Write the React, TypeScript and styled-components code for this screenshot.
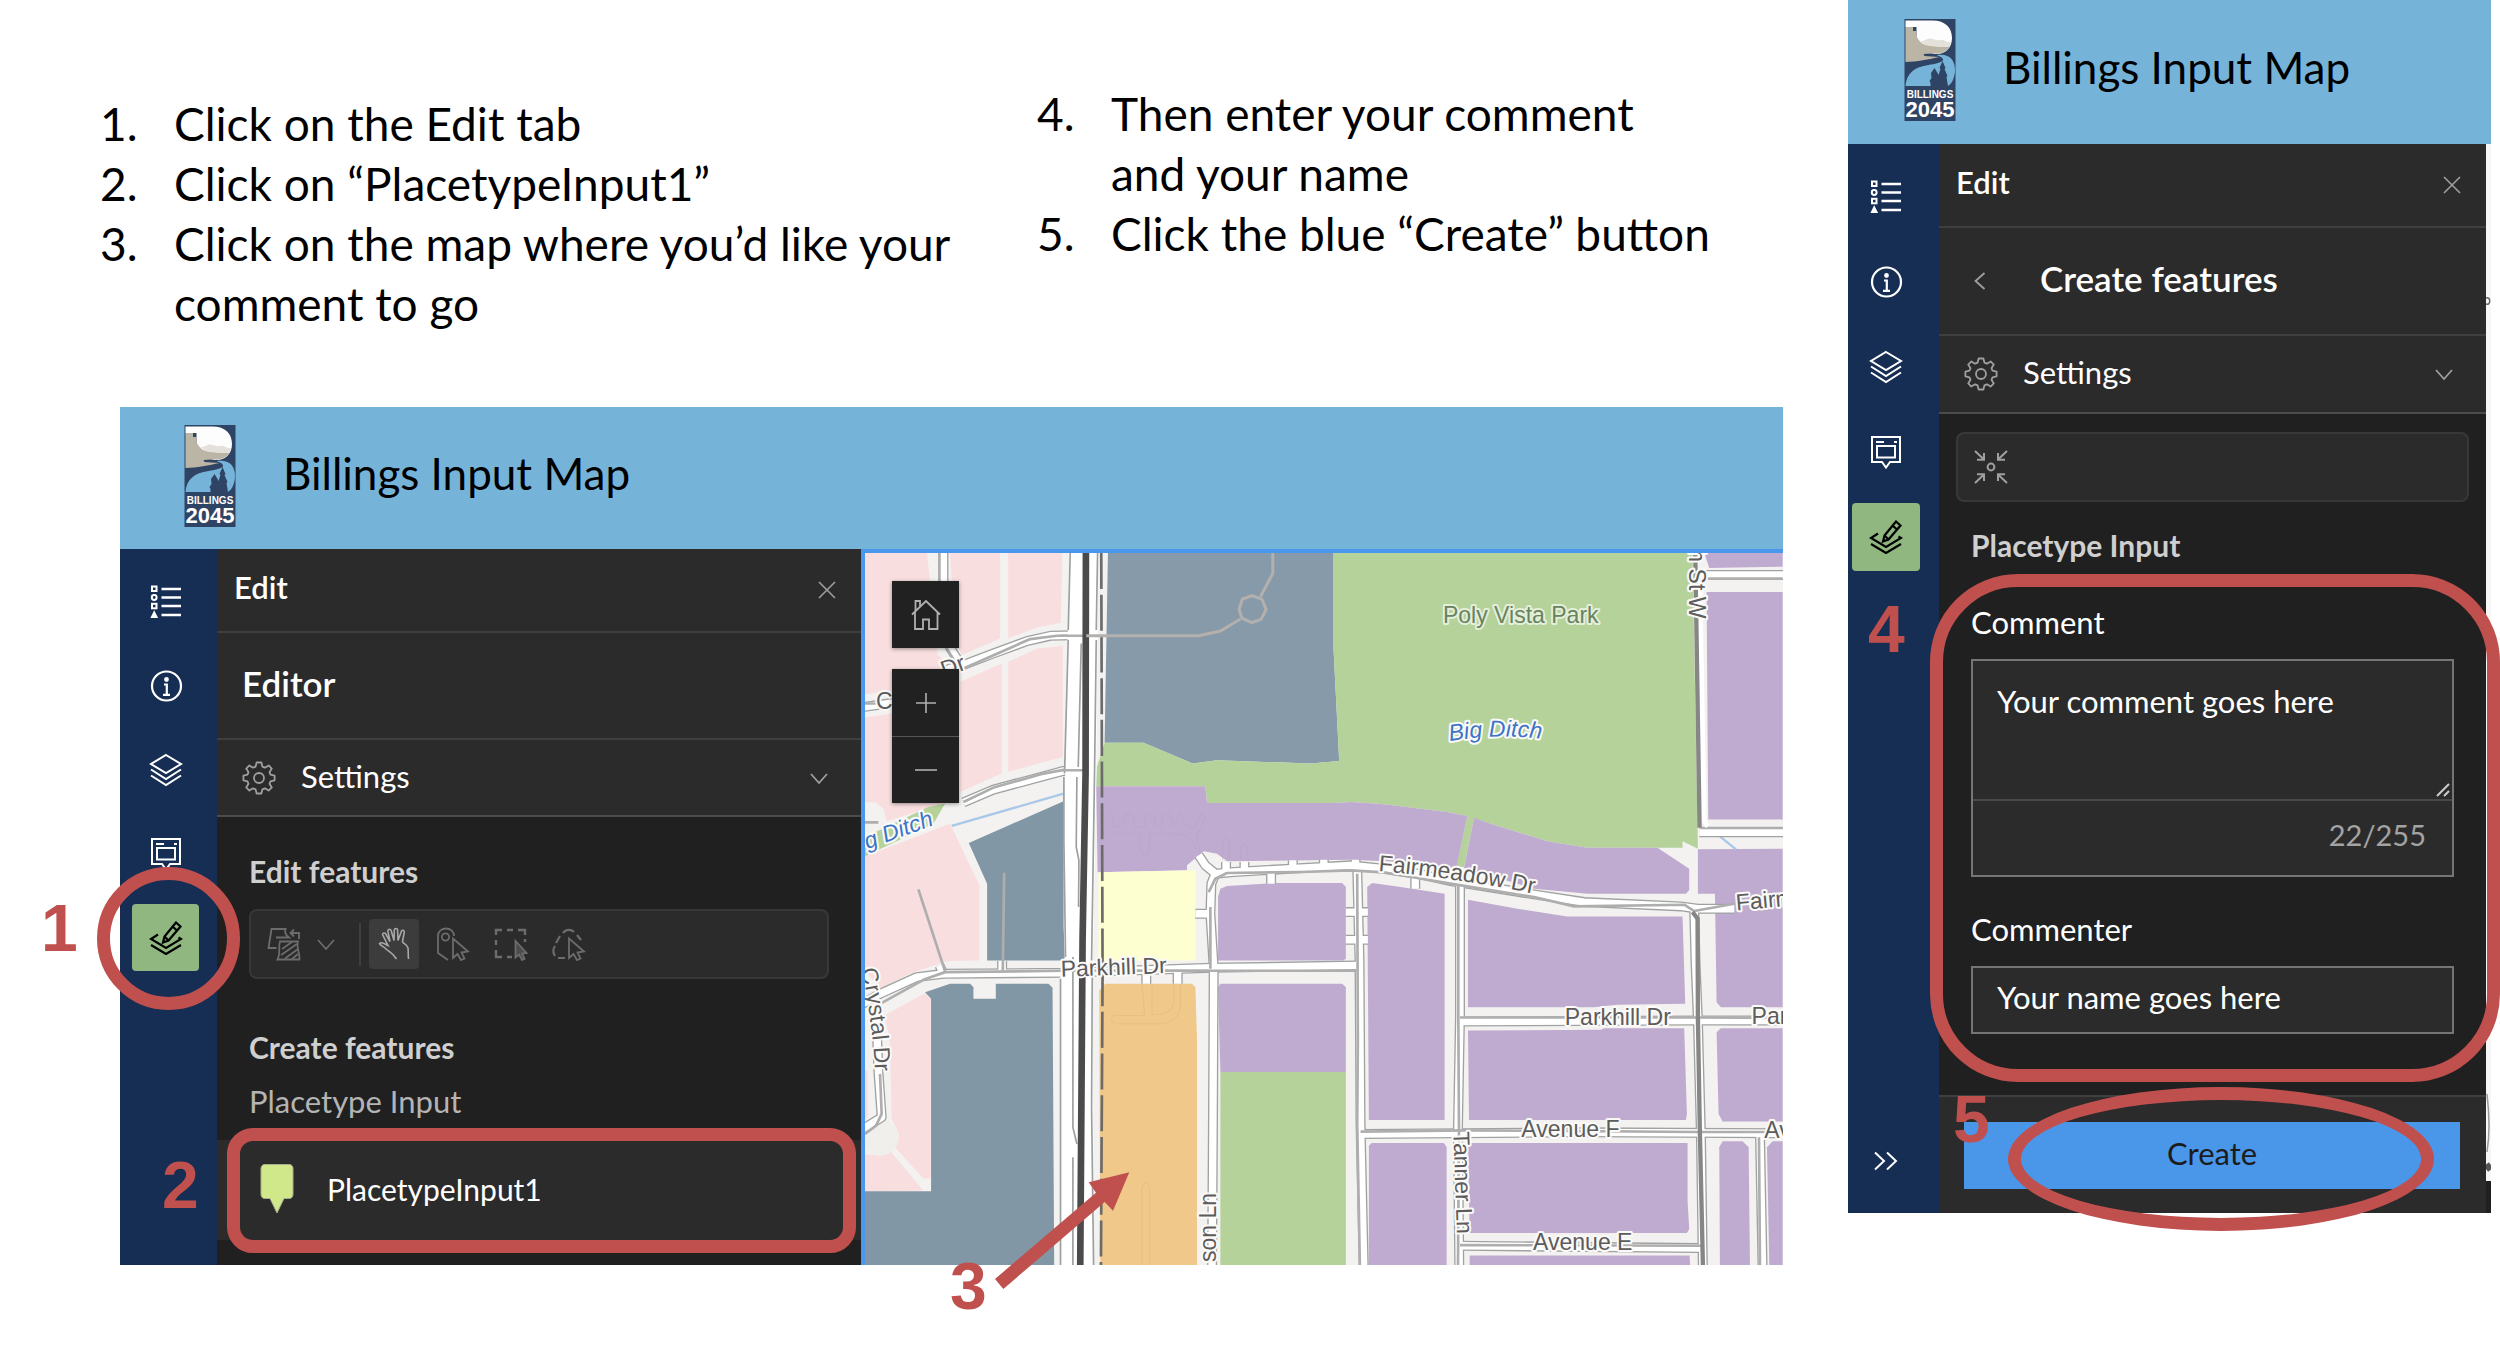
import React from "react";
import styled, { createGlobalStyle } from "styled-components";

const red = "#c0504d";
const ui = `"Lato", "Open Sans", sans-serif`;
const arial = `"Liberation Sans", Arial, sans-serif`;

const GlobalStyle = createGlobalStyle`
  * { box-sizing: border-box; }
  body { margin: 0; background: #fff; font-family: ${ui}; }
  h1, h2, h3, p, ol { margin: 0; padding: 0; font-weight: 400; }
  button, input, textarea { font: inherit; }
  svg { display: block; }
`;

/* ---------- page ---------- */

const Page = styled.main`
  display: grid;
  grid-template-columns: minmax(0, 1fr) 652px;
  align-items: start;
`;

const Guide = styled.section`
  padding: 94px 65px 60px 120px;
`;

const Columns = styled.div`
  display: grid;
  grid-template-columns: 937px 1fr;
  margin-left: -20px;
  min-height: 313px;
  align-items: start;
`;

const Steps = styled.ol<{ $raised?: boolean }>`
  display: grid;
  list-style: none;
  font-size: 46px;
  line-height: 60px;
  color: #000;
  margin-top: ${(p) => (p.$raised ? "-10px" : "0")};
`;

const Step = styled.li`
  display: grid;
  grid-template-columns: 74px 1fr;
`;

/* ---------- application window ---------- */

const Window = styled.section`
  position: relative;
  background: #202020;
`;

const Banner = styled.header<{ $height: number; $inset: number }>`
  display: flex;
  align-items: center;
  gap: 47px;
  height: ${(p) => p.$height}px;
  padding: 0 0 4px ${(p) => p.$inset}px;
  background: #76b3d9;
`;

const AppTitle = styled.h1`
  font-size: 44px;
  line-height: 52px;
  padding-bottom: 6px;
  color: #000;
`;

const Workspace = styled.div<{ $columns: string }>`
  display: grid;
  grid-template-columns: ${(p) => p.$columns};
`;

const Rail = styled.nav<{ $inset: number; $size: number }>`
  display: flex;
  flex-direction: column;
  align-items: flex-start;
  gap: 17px;
  padding: 19px 0 18px ${(p) => p.$inset}px;
  background: #172e54;
  button { width: ${(p) => p.$size}px; height: ${(p) => p.$size}px; }
`;

const RailSlot = styled.div`
  position: relative;
`;

const RailButton = styled.button<{ $active?: boolean }>`
  display: grid;
  place-items: center;
  padding: 0;
  border: 0;
  border-radius: 4px;
  color: ${(p) => (p.$active ? "#000" : "#fff")};
  background: ${(p) => (p.$active ? "#8fb77f" : "transparent")};
`;

const RailEnd = styled.div`
  margin-top: auto;
`;

const Panel = styled.div`
  display: flex;
  flex-direction: column;
  background: #202020;
  color: #fff;
`;

const PanelRow = styled.div<{ $height: number; $pad: string; $gap?: number; $strong?: boolean }>`
  display: flex;
  align-items: center;
  gap: ${(p) => p.$gap ?? 0}px;
  height: ${(p) => p.$height}px;
  padding: ${(p) => p.$pad};
  background: #2b2b2b;
  border-bottom: 2px solid ${(p) => (p.$strong ? "#4c4c4c" : "#3f3f3f")};
`;

const PanelTitle = styled.h2<{ $large?: boolean }>`
  flex: 1;
  font-size: ${(p) => (p.$large ? 35 : 31)}px;
  line-height: 36px;
  font-weight: 600;
  padding-bottom: 6px;
`;

const SettingsToggle = styled.button`
  display: flex;
  align-items: center;
  flex: 1;
  gap: 25px;
  padding: 0;
  border: 0;
  background: none;
  color: #fff;
  font-size: 31px;
  line-height: 36px;
  text-align: left;
`;

const SettingsText = styled.span`
  flex: 1;
  padding-bottom: 4px;
`;

const IconButton = styled.button<{ $active?: boolean; $size?: number }>`
  display: grid;
  place-items: center;
  width: ${(p) => p.$size ?? 34}px;
  height: ${(p) => p.$size ?? 34}px;
  padding: 0;
  border: 0;
  border-radius: 4px;
  color: ${(p) => (p.$active ? "#a8a8a8" : "inherit")};
  background: ${(p) => (p.$active ? "#3c3c3c" : "none")};
`;

const Muted = styled.span`
  display: grid;
  color: #9f9f9f;
`;

const Body = styled.div<{ $pad: string }>`
  display: flex;
  flex-direction: column;
  flex: 1;
  padding: ${(p) => p.$pad};
`;

const SectionTitle = styled.h3<{ $top: number }>`
  margin-top: ${(p) => p.$top}px;
  font-size: 30px;
  line-height: 36px;
  font-weight: 700;
  color: #cfcfcf;
`;

const LayerName = styled.p`
  margin: 18px 0 21px;
  font-size: 31px;
  line-height: 36px;
  color: #b4b4b4;
`;

const Toolbar = styled.div<{ $margin: string }>`
  display: flex;
  align-items: center;
  height: 70px;
  margin: ${(p) => p.$margin};
  padding: 0 16px;
  border: 2px solid #383838;
  border-radius: 8px;
  background: #2b2b2b;
  color: #6c6c6c;
`;

const ToolGroup = styled.div<{ $gap: number }>`
  display: flex;
  align-items: center;
  gap: ${(p) => p.$gap}px;
`;

const Divider = styled.span`
  width: 2px;
  height: 43px;
  margin: 0 8px 0 24px;
  background: #3f3f3f;
`;

const TemplateButton = styled.button`
  position: relative;
  display: flex;
  align-items: center;
  gap: 33px;
  height: 100px;
  margin: 0 -32px;
  padding: 0 0 2px 43px;
  border: 0;
  background: #2b2b2b;
  color: #fff;
  font-size: 30px;
  line-height: 36px;
  text-align: left;
`;

const FieldLabel = styled.label<{ $top: number }>`
  margin-top: ${(p) => p.$top}px;
  font-size: 31px;
  line-height: 36px;
`;

const AreaBox = styled.div`
  position: relative;
  margin-top: 19px;
  border: 2px solid #757575;
  background: #2b2b2b;
`;

const CommentArea = styled.textarea`
  display: block;
  width: 100%;
  height: 140px;
  padding: 22px 24px;
  border: 0;
  border-bottom: 2px solid #484848;
  resize: none;
  background: none;
  color: #fff;
  font-size: 31px;
  line-height: 36px;
  overflow: hidden;
`;

const Grip = styled.svg`
  position: absolute;
  right: 2px;
  top: 122px;
`;

const Counter = styled.div`
  padding: 16px 26px 22px;
  font-size: 29px;
  line-height: 36px;
  text-align: right;
  color: #a3a3a3;
`;

const NameInput = styled.input`
  width: 100%;
  height: 68px;
  margin-top: 19px;
  padding: 0 24px 6px;
  border: 2px solid #757575;
  border-radius: 0;
  background: #2b2b2b;
  color: #fff;
  font-size: 31px;
`;

const Footer = styled.footer`
  display: grid;
  padding: 25px 26px 24px 25px;
  border-top: 2px solid #3f3f3f;
  background: #2b2b2b;
`;

const CreateButton = styled.button`
  height: 67px;
  padding: 0 0 6px;
  border: 0;
  background: #4a97ea;
  color: #1c1c1c;
  font-size: 31px;
`;

const MapEdge = styled.div`
  background: linear-gradient(#f7f7f7 0 1037px, #202020 1037px);
`;

/* ---------- map ---------- */

const MapFrame = styled.div`
  position: relative;
  min-height: 716px;
  border-top: 4px solid #4a97ee;
  border-left: 4px solid #4a97ee;
  overflow: hidden;
`;

const MapCanvas = styled.svg`
  position: absolute;
  inset: 0;
  width: 100%;
  height: 100%;
`;

const MapControls = styled.div`
  position: absolute;
  left: 27px;
  top: 28px;
  display: grid;
  gap: 21px;
`;

const ControlStack = styled.div`
  display: grid;
  box-shadow: 0 1px 4px rgba(0, 0, 0, 0.4);
  button + button { border-top: 1px solid #555; }
`;

const MapButton = styled.button`
  display: grid;
  place-items: center;
  width: 67px;
  height: 67px;
  padding: 0;
  border: 0;
  background: #212121;
  color: #b0b0b0;
`;

/* ---------- callouts laid over the windows ---------- */

const Ring = styled.span<{ $box: string; $radius: string }>`
  position: absolute;
  inset: ${(p) => p.$box};
  border: 13px solid ${red};
  border-radius: ${(p) => p.$radius};
  pointer-events: none;
  z-index: 2;
`;

const Callout = styled.span<{ $left: number; $top: number }>`
  position: absolute;
  left: ${(p) => p.$left}px;
  top: ${(p) => p.$top}px;
  font: 700 66px/48px ${arial};
  color: ${red};
  z-index: 2;
`;

const Arrow = styled.svg`
  position: absolute;
  left: 875px;
  top: 765px;
  z-index: 2;
`;

/* ---------- icons ---------- */

type IconProps = { size?: number; w?: number; children: React.ReactNode; box?: string };
const Icon = ({ size = 34, w = 2, box = "0 0 34 34", children }: IconProps) => (
  <svg width={size} height={size} viewBox={box} fill="none" stroke="currentColor" strokeWidth={w} aria-hidden>
    {children}
  </svg>
);

const LegendIcon = () => (
  <Icon>
    <path d="M12.500 4H32M12.500 12.500H32M12.500 21H32M12.500 30H32" strokeWidth="2.600" />
    <rect x="3" y="1.500" width="4.500" height="4.500" />
    <circle cx="5.200" cy="12.500" r="2.400" />
    <rect x="3" y="18.800" width="4.500" height="4.500" />
    <path d="M5.200 27.500 7.500 32H3Z" fill="currentColor" />
  </Icon>
);

const InfoIcon = () => (
  <Icon w={2.2}>
    <circle cx="17.500" cy="17" r="14.500" />
    <circle cx="17.500" cy="10.500" r="1.300" fill="currentColor" />
    <path d="M15 15.500H17.800V25.500M14 25.800H21" />
  </Icon>
);

const LayersIcon = () => (
  <Icon>
    <path d="M17 2 32 11 17 20 2 11Z" />
    <path d="M2 16.500 17 26 32 16.500M2 22.500 17 32 32 22.500" />
  </Icon>
);

const PopupIcon = () => (
  <Icon>
    <path d="M3 2H31V27H21L17 32.500 13 27H3Z" />
    <rect x="8" y="11" width="18" height="11.500" />
    <path d="M7 7H15M25 7H28" />
  </Icon>
);

const EditIcon = () => (
  <Icon w={2.2}>
    <path d="M9 13.500 2 18 17 27 32 18 29.500 16.500" />
    <path d="M2 24 17 33 32 24" />
    <path d="M27 1.500 31.500 5.500 19.500 19.500 14 21.500 15.500 15.500ZM23.500 5.500 28 9.500M15.500 15.500 19.500 19.500" />
  </Icon>
);

const CloseIcon = () => (
  <Icon size={18} w={1.6} box="0 0 18 18">
    <path d="M1 1 17 17M17 1 1 17" />
  </Icon>
);

const ChevronDown = () => (
  <Icon size={18} w={1.8} box="0 0 18 18">
    <path d="M1 5 9 14 17 5" />
  </Icon>
);

const ChevronLeft = () => (
  <Icon size={18} w={1.8} box="0 0 18 18">
    <path d="M13.500 1 4.500 9 13.500 17" />
  </Icon>
);

const ExpandIcon = () => (
  <Icon size={26} w={2} box="0 0 26 26">
    <path d="M2 4.500 11 13 2 21.500M14 4.500 23 13 14 21.500" />
  </Icon>
);

const GearIcon = () => (
  <Icon w={1.8}>
    <path d="M14.600 1.500H19.400L20.400 5.600 23 6.700 26.600 4.400 29.800 7.600 27.500 11.200 28.500 13.700 32.600 14.700V19.300L28.500 20.300 27.500 22.800 29.800 26.400 26.600 29.600 23 27.300 20.400 28.400 19.400 32.500H14.600L13.600 28.400 11 27.300 7.400 29.600 4.200 26.400 6.500 22.800 5.500 20.300 1.400 19.300V14.700L5.500 13.700 6.500 11.200 4.200 7.600 7.400 4.400 11 6.700 13.600 5.600Z" strokeLinejoin="round" />
    <circle cx="17" cy="17" r="5" />
  </Icon>
);

const TransferIcon = () => (
  <Icon w={1.8}>
    <path d="M9.500 21H1.500L4.500 2H18.500C17 6 20 9 22 10.500H9" />
    <path d="M13 14.500H31C29 20 33 26 32.500 32.500H10.500C14 26 11 20 13 14.500Z" />
    <path d="M15 22 25 15M14 28 30 17M18 31.500 31 22M25 32 31 27" />
    <path d="M24 6H32V12M27 2.500 23.500 6 27 9.500" />
  </Icon>
);

const HandIcon = () => (
  <Icon w={1.6}>
    <path d="M19.500 32C16 26 11.500 24.500 8.500 21.500 6.500 19.500 3 18.500 2.500 16.500 4.500 14 8 17 11 18.500L5.500 7.500C5.500 5.500 8 5.500 8.800 7L13 14.500 10.800 4C11 1.800 13.500 1.800 14.200 3.800L17 13.500 17.300 2.800C17.800 1 20.300 1 20.600 2.800L21 13.500 24.500 4C25.500 2.500 27.500 3.500 27.300 5.200L25.500 14.500C26 17 30 17 31 21 31.500 25 31 28.500 31.500 32" />
  </Icon>
);

const pointer = "M17 11.500V31L21.500 27 25 33 28.500 31.500 25.500 25.500 32 24.500Z";

const SelectFeatureIcon = () => (
  <Icon w={1.8}>
    <path d="M12 33 2 26V9C2 4 6 1.500 10 1.500S18 4 18 9" />
    <circle cx="9.500" cy="10" r="3.600" />
    <path d={pointer} />
  </Icon>
);

const SelectRectIcon = () => (
  <Icon w={2.4}>
    <path d="M2 8V3H8M13 3H19M24 3H31V8M31 12V15M2 13V18M2 23V30H8M13 30H18" />
    <path d="M21.500 14V30.500L25 27.500 28 33 30.500 31.800 28 26.500 32.500 26Z" strokeWidth="1.800" fill="currentColor" fillOpacity=".5" />
  </Icon>
);

const SelectLassoIcon = () => (
  <Icon w={1.8}>
    <path d="M11 6C14 2 19 2 22 5M25 8 29 13M8 9 4 16M3 19C1 22 1 26 3 29M6 31H13" strokeWidth="2.200" />
    <path d={pointer} />
  </Icon>
);

const CollapseIcon = () => (
  <Icon w={2}>
    <path d="M1 1 10 9.500M10 3V9.800H3M33 1 24 9.500M24 3V9.800H31M1 33 10 24.500M10 31V24.200H3M33 33 24 24.500M24 31V24.200H31" />
    <circle cx="17" cy="17" r="3.400" />
  </Icon>
);

const HomeIcon = () => (
  <Icon size={32} w={1.8} box="0 0 32 32">
    <path d="M2 15.500 16 2 30 15.500M5 13V30H13V20.500H19V30H27.500V13M5.500 12V2H10V7.500" />
  </Icon>
);

const PinIcon = () => (
  <svg width="34" height="50" viewBox="0 0 34 50" aria-hidden>
    <path d="M5 0.500H29Q33 0.500 33 5V30Q33 34.500 29 34.500H24L17 49 10 34.500H5Q1 34.500 1 30V5Q1 0.500 5 0.500Z" fill="#d1e88a" stroke="#a8ad8d" />
  </svg>
);

const Logo = () => (
  <svg width="52" height="102" viewBox="0 0 51 102" role="img" aria-label="Billings 2045">
    <rect width="51" height="102" fill="#2f4464" />
    <path d="M1 1.500H28C41 1.500 47.500 9 47.500 19S41 35 30 35L12 30V8H1Z" fill="#fdfdfd" />
    <path d="M16 22C21 22 23 19 26 19.500S33 22 36 21 43 24 46.500 23C45 30 41 35 32 35Z" fill="#e3e1da" />
    <path d="M1 8H8.500V12H12V17C14 22 18 26 25 27 32 28 37 28 45 28 42 33 35 35 28 34.500L19 35 20 37 35 38C25 40 12 43 1 43Z" fill="#bbb5a6" />
    <path d="M32 36C45 34 51 41 50.500 52 50 60 46.500 66 43 67H1C2 54 10 48 24 46 37 44 45 41 32 36Z" fill="#76b3d9" />
    <path d="M38 42 41 49 40 50 43 57 42 58 43.500 67H26V64L25 62 27 59 26.500 54 30 49 33 54 34 56 36 50 35 49Z" fill="#2f4464" />
    <text x="25.500" y="79" fontFamily="Liberation Sans, sans-serif" fontSize="10" fontWeight="700" textAnchor="middle" fill="#fff">BILLINGS</text>
    <text x="25.500" y="98" fontFamily="Liberation Sans, sans-serif" fontSize="22" fontWeight="700" textAnchor="middle" fill="#fff">2045</text>
  </svg>
);

/* ---------- map drawing ---------- */

const zones: { fill: string; shapes: string[] }[] = [
  {
    fill: "#f9dedf",
    shapes: [
      "45,39 231,39 240,125 262,340 290,375 130,450 45,462",
      "300,39 450,39 450,295 335,345 315,300",
      "474,39 636,39 632,248 560,262 474,295",
      "330,425 455,370 455,700 330,755",
      "474,365 560,325 638,318 638,650 474,695",
      "45,532 127,520 330,760 280,790 110,843 100,805 75,787 45,785",
      "45,948 300,850 388,1035 388,1260 290,1262 180,1300 90,1345 45,1290",
      "103,1425 225,1358 243,1375 243,1912 220,1914 135,1820 147,1780 125,1735 122,1600 118,1490",
      "45,1840 90,1845 120,1830 220,1950 45,1952",
      "45,1590 53,1590 53,1725 45,1740",
    ],
  },
  {
    fill: "#879aa9",
    shapes: ["773,39 1449,39 1449,325 1466,662 1380,670 1100,660 1027,670 880,608 763,608"],
  },
  {
    fill: "#8297a5",
    shapes: [
      "640,783 356,908 411,1030 411,1260 645,1260 640,1160",
      "225,1355 300,1330 360,1330 370,1340 370,1375 437,1375 437,1330 595,1330 607,1342 612,2175 45,2175 45,1952 243,1952 243,1375",
    ],
  },
  {
    fill: "#b4d29a",
    shapes: [
      "1449,39 2525,39 2541,925 2495,903 2495,922 2210,922 2090,903 1925,852 1870,835 1840,980 1817,980 1850,827 1790,815 1600,792 1500,785 1450,788 1070,788 1065,738 738,738 740,680 763,608 880,608 1027,670 1100,660 1380,670 1466,662 1449,325",
      "45,948 45,890 235,800 285,790 250,850",
      "1110,1594 1486,1594 1486,2175 1110,2175",
    ],
  },
  {
    fill: "#c0abd0",
    shapes: [
      "738,738 1065,738 1070,788 1450,788 1500,785 1600,792 1790,815 1850,827 1817,983 1650,965 1500,958 1130,963 1100,940 1060,933 1010,975 1010,990 742,996",
      "1870,833 1925,852 2090,903 2210,922 2420,922 2515,985 2515,1050 2505,1060 2210,1060 2050,1045 1840,983",
      "2560,39 2795,39 2795,80 2575,84",
      "2567,156 2795,156 2795,838 2572,838",
      "2541,927 2795,925 2795,1400 2610,1400 2597,1385 2592,1060 2541,1060",
      "1110,1045 1130,1037 1280,1028 1475,1028 1486,1040 1486,1255 1478,1260 1103,1260 1103,1070",
      "1550,1040 1565,1028 1650,1040 1782,1060 1782,1738 1555,1738",
      "1852,1078 2000,1105 2150,1128 2495,1128 2503,1390 2300,1393 2230,1400 1852,1400",
      "1103,1340 1110,1330 1475,1330 1486,1340 1486,1594 1110,1594",
      "1852,1470 2250,1468 2260,1463 2500,1463 2503,1560 2508,1720 2505,1738 1855,1738",
      "2597,1475 2610,1463 2795,1463 2795,1743 2615,1743 2603,1720",
      "1555,1815 1563,1807 1780,1807 1788,1820 1788,2175 1555,2175",
      "1852,1807 2510,1807 2510,1980 2515,2065 2508,2077 1857,2077",
      "1857,2144 2516,2144 2518,2175 1857,2175",
      "2605,1820 2615,1802 2675,1802 2693,1820 2697,2175 2607,2175",
      "2748,1820 2765,1802 2795,1802 2795,2175 2755,2175",
    ],
  },
  { fill: "#feffd0", shapes: ["745,996 1035,990 1035,1260 745,1260"] },
  { fill: "#efc88a", shapes: ["747,1350 765,1330 1025,1330 1035,1340 1040,1500 1040,2175 750,2175"] },
];

const roads = [
  "M280 30V130L300 323 335 378",
  "M335 376 430 340 530 303 600 287 700 285",
  "M340 786 430 748 580 708 640 692 700 690",
  "M30 502 130 488 300 385 335 378",
  "M30 1395 90 1360 200 1310 280 1300 640 1297 1085 1282 1518 1275",
  "M78 1400 85 1590 95 1730 30 1770",
  "M268 1275 280 1300M456 1262V1300M888 1300V1330M982 1295V1330",
  "M1045 945 1065 975 1095 1000 1150 995 1320 985 1500 975 1600 985 1700 1000 1800 1022 2050 1062 2200 1085 2490 1098 2540 1105 2650 1105",
  "M1095 1000 1083 1030 1080 1120 1090 1280 1088 1700 1085 2190",
  "M1035 1120H1080M1262 990V1030M1127 965V995M1182 965V995M1327 960V985M1420 958V980M1515 958V980",
  "M1520 980 1527 1260 1530 1750 1540 2190",
  "M1486 1115H1552M1486 1198H1552M1694 1000V1045",
  "M1828 1030V1430L1822 1760 1826 2190",
  "M1828 1443 2540 1440 2810 1440",
  "M1530 1780 2200 1775 2810 1778",
  "M1828 2115 2550 2122",
  "M2727 1780 2735 2190",
  "M2550 105 2810 105",
  "M2545 876H2810",
  "M2530 1110 2534 1270 2541 1440 2550 1780 2556 2190",
];

const centreLines = [
  "M268 39V123M290 325 330 390",
  "M340 385 540 297 620 287H695",
  "M340 785 430 742 580 700 640 689H695",
  "M45 490H85M45 846H85",
  "M90 1390 220 1318 285 1295 640 1291 1075 1291H1518",
  "M90 1600 95 1720 78 1755 45 1780",
  "M205 1047 285 1293M462 997 458 1290",
  "M1075 1055 1095 1015 1130 998 1350 995 1500 990 1600 996 1700 1013 1850 1038 2050 1070 2170 1098 2500 1093 2530 1112 2650 1090",
  "M1080 1100V1285",
  "M1520 1000 1522 1500 1520 1750 1528 2175",
  "M1823 1035V1430L1825 1760 1822 2175",
  "M1828 1431H2540L2795 1432",
  "M1530 1773 1850 1769 2540 1774 2795 1774",
  "M1828 2113 2550 2115",
  "M2724 1790 2727 2175",
  "M2565 116H2795M2550 863H2795",
];

const Halo = styled.text`
  font-family: ${arial};
  font-size: 69px;
  fill: #5c5c5c;
  stroke: #fbfaf8;
  stroke-width: 12px;
  stroke-linejoin: round;
  paint-order: stroke;
`;

const WaterLabel = styled(Halo)`
  font-style: italic;
  fill: #3d74c8;
`;

const ParkLabel = styled(Halo)`
  fill: #68845f;
  stroke: #e4efda;
`;

const StreetMap = () => (
  <MapCanvas viewBox="45 39 2751 2136" preserveAspectRatio="xMinYMin slice" role="img" aria-label="Street map">
    <rect x="0" y="0" width="4000" height="3000" fill="#f3f2f0" />
    {zones.map((z) => z.shapes.map((s) => <polygon key={s} points={s} fill={z.fill} />))}
    <ellipse cx="90" cy="1790" rx="56" ry="55" fill="#f0efec" />
    <g fill="none" stroke="#ae9fbd" strokeOpacity=".3" strokeWidth="3">
      <path d="M775 815Q790 815 790 860H820V835Q835 805 850 835V860H885V835Q900 805 915 835V860H935V835Q950 805 965 835V855Q980 850 980 830 990 805 1000 850L1030 865 1050 820 1065 830 1040 885 1050 950M775 880H870V930Q885 955 897 930V880H975Q1020 880 1040 930M1117 960V905Q1127 880 1137 905V960M1172 960V920Q1182 900 1192 920V960" />
    </g>
    <g fill="none" stroke="#d0a86e" strokeOpacity=".25" strokeWidth="3">
      <path d="M875 1330 883 1425H790Q775 1440 795 1450H930Q985 1445 990 1400V1330M905 1330V1422H930Q965 1415 970 1390V1330M875 2175V1940Q887 1910 898 1940V2175" />
    </g>
    <path d="M305 857 640 760M2560 850 2655 927" stroke="#a9c7e8" strokeWidth="7" />
    <g fill="none" stroke="#a0a2a2" strokeWidth="30" strokeLinejoin="round">
      {roads.map((d) => <path key={d} d={d} />)}
    </g>
    <g fill="none" stroke="#fff" strokeWidth="22" strokeLinejoin="round">
      {roads.map((d) => <path key={d} d={d} />)}
    </g>
    <g fill="none" stroke="#aeaeae" strokeWidth="8" strokeLinejoin="round">
      {centreLines.map((d) => <path key={d} d={d} />)}
    </g>
    <polygon points="657,39 745,39 742,270 738,690 728,1260 730,2175 630,2175 630,1310 643,1260 641,900 645,690" fill="#fff" />
    <path d="M660 39 654 270M654 300 643 700M641 710V900L646 1250M631 1315V2175M742 39 738 270M738 300 733 690 724 1260M726 1310 724 1700 730 2175M693 310 684 680M680 710 678 920 686 960 685 1100M668 1250V1760L680 1810M668 1850V2175" fill="none" stroke="#9da0a0" strokeWidth="5" />
    <path d="M630 287H700M635 690H700M640 1291H1075" stroke="#aeaeae" strokeWidth="8" />
    <path d="M707 39 706 700 697 1200 690 2175" fill="none" stroke="#4b4b4b" strokeWidth="20" />
    <path d="M753 39 755 700 757 1300 752 2175" fill="none" stroke="#6d6a6a" strokeWidth="8" strokeDasharray="108 17" />
    <g fill="none" stroke="#b3b0ae" strokeWidth="9">
      <path d="M708 287H1045L1110 273 1170 237M1230 170 1267 100V39" />
      <path d="M1205 167 1235 178 1247 208 1232 238 1204 248 1175 235 1166 208 1176 177Z" />
    </g>
    <path d="M2547 120 2560 840 2570 860" fill="none" stroke="#fff" strokeWidth="14" />
    <path d="M2533 39 2546 862M2525 1115 2540 1135 2541 1430 2547 1780 2556 2175" fill="none" stroke="#868686" strokeWidth="13" />

    <defs>
      <path id="fairmeadow" d="M1583 992Q1800 1010 2060 1062" />
      <path id="bigditch" d="M1797 603Q1960 575 2110 602" />
      <path id="crystal" d="M30 1290C50 1340 52 1380 62 1450S72 1550 76 1620" />
    </defs>
    <ParkLabel x="1777" y="250">Poly Vista Park</ParkLabel>
    <WaterLabel><textPath href="#bigditch">Big Ditch</textPath></WaterLabel>
    <WaterLabel transform="translate(52 927) rotate(-20)">g Ditch</WaterLabel>
    <Halo><textPath href="#fairmeadow">Fairmeadow Dr</textPath></Halo>
    <Halo><textPath href="#crystal">Crystal Dr</textPath></Halo>
    <Halo transform="translate(632 1309) rotate(-2)">Parkhill Dr</Halo>
    <Halo x="2142" y="1453">Parkhill Dr</Halo>
    <Halo x="2702" y="1450">Parkhill Dr</Halo>
    <Halo x="2012" y="1790">Avenue F</Halo>
    <Halo x="2740" y="1792">Avenue F</Halo>
    <Halo x="2047" y="2128">Avenue E</Halo>
    <Halo transform="translate(2657 1110) rotate(-5)">Fairmeadow Dr</Halo>
    <Halo transform="translate(2515 28) rotate(90)">h St W</Halo>
    <Halo transform="translate(1808 1773) rotate(88)">Tanner Ln</Halo>
    <Halo transform="translate(1097 2164) rotate(-90)">son Ln</Halo>
    <Halo x="78" y="507">Cr</Halo>
    <Halo transform="translate(282 412) rotate(-20)">Dr</Halo>
  </MapCanvas>
);

/* ---------- shared parts ---------- */

const tabs = [
  { label: "Legend", icon: <LegendIcon /> },
  { label: "Details", icon: <InfoIcon /> },
  { label: "Layers", icon: <LayersIcon /> },
  { label: "Pop-ups", icon: <PopupIcon /> },
];

const SideRail = ({ inset, size, children, end }: { inset: number; size: number; children?: React.ReactNode; end?: boolean }) => (
  <Rail $inset={inset} $size={size}>
    {tabs.map((t) => (
      <RailButton key={t.label} aria-label={t.label}>{t.icon}</RailButton>
    ))}
    <RailSlot>
      <RailButton $active aria-label="Edit"><EditIcon /></RailButton>
      {children}
    </RailSlot>
    {end && (
      <RailEnd>
        <RailButton aria-label="Expand"><ExpandIcon /></RailButton>
      </RailEnd>
    )}
  </Rail>
);

const EditHeader = () => (
  <PanelRow $height={84} $pad="0 17px">
    <PanelTitle>Edit</PanelTitle>
    <Muted><IconButton aria-label="Close"><CloseIcon /></IconButton></Muted>
  </PanelRow>
);

const Settings = ({ height }: { height: number }) => (
  <PanelRow $height={height} $pad="0 33px 0 25px" $strong>
    <SettingsToggle>
      <Muted><GearIcon /></Muted>
      <SettingsText>Settings</SettingsText>
      <Muted><ChevronDown /></Muted>
    </SettingsToggle>
  </PanelRow>
);

const Narrow = styled.div`
  padding-right: 9px;
  background: #fff;
`;

const Fields = styled.div`
  position: relative;
  display: grid;
`;

export default function App() {
  return (
    <>
      <GlobalStyle />
      <Page>
        <Guide>
          <Columns>
            <Steps>
              <Step><span>1.</span><span>Click on the Edit tab</span></Step>
              <Step><span>2.</span><span>Click on “PlacetypeInput1”</span></Step>
              <Step><span>3.</span><span>Click on the map where you’d like your<br />comment to go</span></Step>
            </Steps>
            <Steps $raised>
              <Step><span>4.</span><span>Then enter your comment<br />and your name</span></Step>
              <Step><span>5.</span><span>Click the blue “Create” button</span></Step>
            </Steps>
          </Columns>

          <Window>
            <Banner $height={142} $inset={64}>
              <Logo />
              <AppTitle>Billings Input Map</AppTitle>
            </Banner>
            <Workspace $columns="97px 644px minmax(0, 1fr)">
              <SideRail inset={12} size={67}>
                <Ring $box="-37px -41px -39px -35px" $radius="50%" />
                <Callout $left={-91} $top={0}>1</Callout>
              </SideRail>
              <Panel>
                <EditHeader />
                <PanelRow $height={107} $pad="0 25px">
                  <PanelTitle $large>Editor</PanelTitle>
                </PanelRow>
                <Settings height={77} />
                <Body $pad="0 32px 25px">
                  <SectionTitle $top={36}>Edit features</SectionTitle>
                  <Toolbar $margin="20px 0 0">
                    <ToolGroup $gap={16}>
                      <IconButton aria-label="Transfer attributes"><TransferIcon /></IconButton>
                      <ChevronDown />
                    </ToolGroup>
                    <Divider />
                    <ToolGroup $gap={17}>
                      <IconButton $active $size={50} aria-label="Pan"><HandIcon /></IconButton>
                      <ToolGroup $gap={24}>
                        <IconButton aria-label="Select feature"><SelectFeatureIcon /></IconButton>
                        <IconButton aria-label="Select by rectangle"><SelectRectIcon /></IconButton>
                        <IconButton aria-label="Select by lasso"><SelectLassoIcon /></IconButton>
                      </ToolGroup>
                    </ToolGroup>
                  </Toolbar>
                  <SectionTitle $top={50}>Create features</SectionTitle>
                  <LayerName>Placetype Input</LayerName>
                  <TemplateButton>
                    <PinIcon />
                    PlacetypeInput1
                    <Ring $box="-12px 5px -13px 10px" $radius="26px" />
                    <Callout $left={-55} $top={21}>2</Callout>
                  </TemplateButton>
                </Body>
              </Panel>
              <MapFrame>
                <StreetMap />
                <MapControls>
                  <ControlStack>
                    <MapButton aria-label="Default view"><HomeIcon /></MapButton>
                  </ControlStack>
                  <ControlStack>
                    <MapButton aria-label="Zoom in"><Icon size={20} w={1.6} box="0 0 20 20"><path d="M10 0V20M0 10H20" /></Icon></MapButton>
                    <MapButton aria-label="Zoom out"><Icon size={22} w={1.6} box="0 0 22 22"><path d="M0 11H22" /></Icon></MapButton>
                  </ControlStack>
                </MapControls>
              </MapFrame>
            </Workspace>
            <Callout $left={830} $top={855}>3</Callout>
            <Arrow width="136" height="119" viewBox="0 0 136 119" aria-hidden>
              <path d="M0 107 101 20.700 93.700 10.300 134.300 0.300 118 38.700 109.700 30 8.300 117Z" fill={red} />
            </Arrow>
          </Window>
        </Guide>

        <Window>
          <Narrow>
            <Banner $height={144} $inset={56}>
              <Logo />
              <AppTitle>Billings Input Map</AppTitle>
            </Banner>
            <Workspace $columns="91px minmax(0, 1fr) 5px">
              <SideRail inset={4} size={68} end>
                <Callout $left={16} $top={102}>4</Callout>
              </SideRail>
              <Panel>
                <EditHeader />
                <PanelRow $height={108} $pad="0 27px 0 32px" $gap={51}>
                  <Muted><IconButton $size={18} aria-label="Back"><ChevronLeft /></IconButton></Muted>
                  <PanelTitle $large>Create features</PanelTitle>
                </PanelRow>
                <Settings height={78} />
                <Body $pad="0 32px 61px">
                  <Toolbar $margin="18px -15px 0">
                    <Muted><IconButton aria-label="Snap to centre"><CollapseIcon /></IconButton></Muted>
                  </Toolbar>
                  <SectionTitle $top={25}>Placetype Input</SectionTitle>
                  <Fields>
                    <FieldLabel $top={41} htmlFor="comment">Comment</FieldLabel>
                    <AreaBox>
                      <CommentArea id="comment" defaultValue="Your comment goes here" />
                      <Grip width="14" height="14" viewBox="0 0 14 14" aria-hidden>
                        <path d="M1 13 13 1M8 13 13 8" stroke="#ccc" strokeWidth="2" />
                      </Grip>
                      <Counter>22/255</Counter>
                    </AreaBox>
                    <FieldLabel $top={34} htmlFor="commenter">Commenter</FieldLabel>
                    <NameInput id="commenter" defaultValue="Your name goes here" />
                    <Ring $box="11px -46px -48px -41px" $radius="88px" />
                  </Fields>
                </Body>
                <Footer>
                  <Fields>
                    <CreateButton>Create</CreateButton>
                    <Ring $box="-35px 26px -42px 44px" $radius="50%" />
                    <Callout $left={-11} $top={-27}>5</Callout>
                  </Fields>
                </Footer>
              </Panel>
              <MapEdge>
                <svg width="5" height="1037" viewBox="0 0 5 1037" aria-hidden>
                  <path d="M0 154C5 152 5 162 0 160" fill="none" stroke="#666" strokeWidth="1.500" />
                  <path d="M1 950C4 975 4 990 1 1008" fill="none" stroke="#999" strokeWidth="1.500" />
                  <path d="M0 1025 5 1021" stroke="#555" strokeWidth="7" />
                </svg>
              </MapEdge>
            </Workspace>
          </Narrow>
        </Window>
      </Page>
    </>
  );
}
